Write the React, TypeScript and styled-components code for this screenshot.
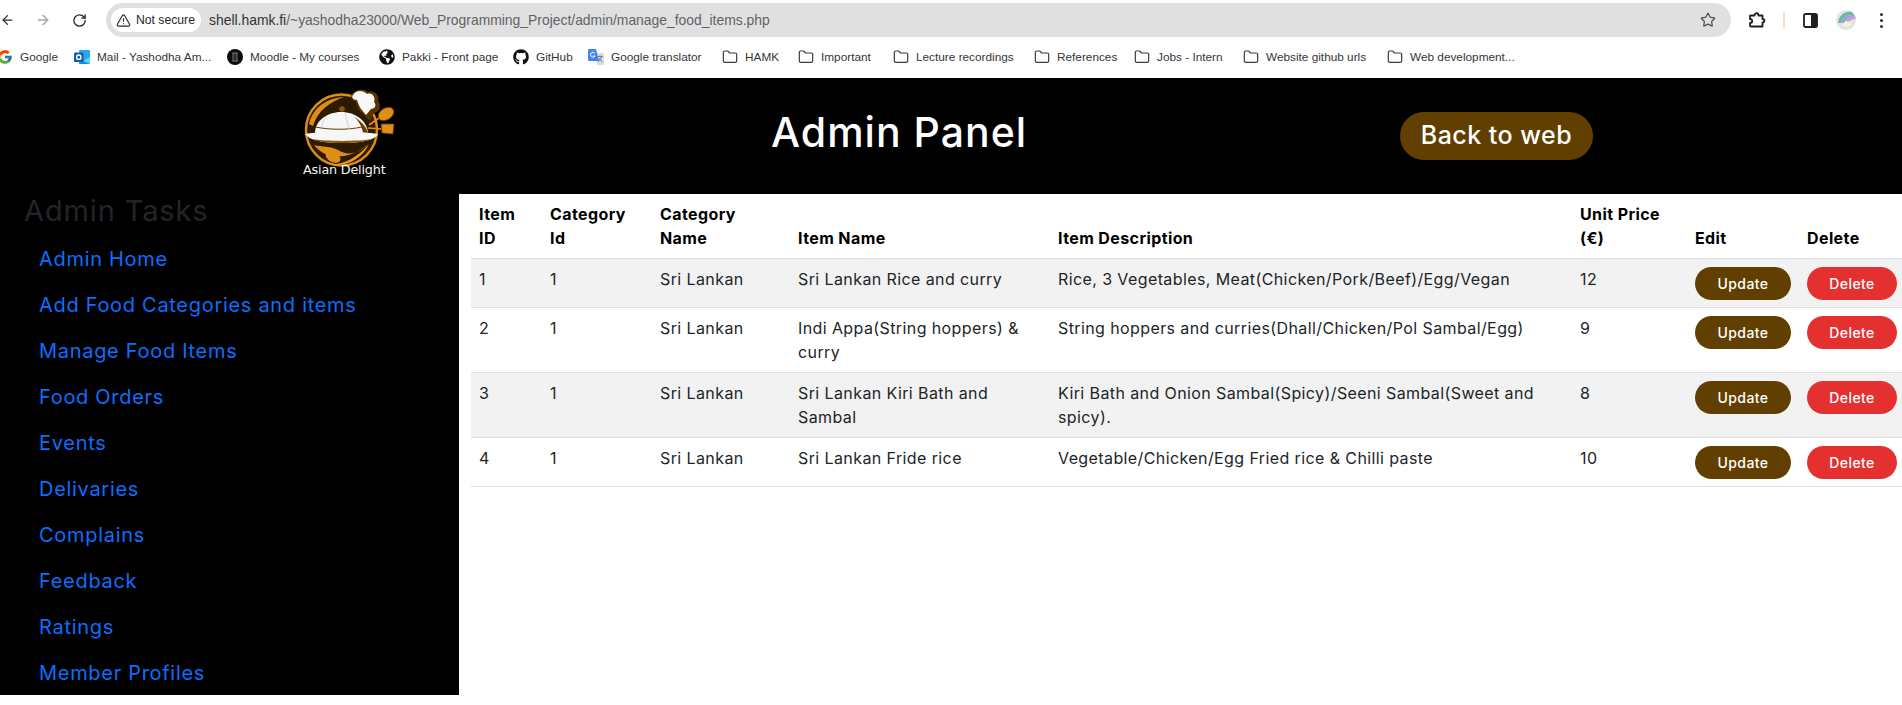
import React from "react";
import styled, { createGlobalStyle } from "styled-components";
import { ArrowLeft, ArrowRight, RotateCw, Star, TriangleAlert, Folder } from "lucide-react";
import { FaGithub, FaGlobeAmericas } from "react-icons/fa";
import { FcGoogle } from "react-icons/fc";

const Global = createGlobalStyle`
  html, body { margin: 0; padding: 0; background: #fff; }
  body { overflow: hidden; height: 705px; }
  * { box-sizing: border-box; }
`;

const PAGE_FONT = `Inter, "Open Sans", sans-serif`;
const UI_FONT = `"Liberation Sans", Arial, sans-serif`;

const Window = styled.div`
  width: 1902px;
  height: 705px;
  overflow: hidden;
  display: flex;
  flex-direction: column;
  background: #fff;
`;

const Toolbar = styled.div`
  height: 40px;
  display: flex;
  align-items: center;
  flex: none;
`;

const NavButton = styled.span<{ $w: number; $muted?: boolean }>`
  width: ${(p) => p.$w}px;
  flex: none;
  display: flex;
  justify-content: center;
  color: ${(p) => (p.$muted ? "#a3a5a8" : "#2b2d30")};
`;

const Omnibox = styled.div`
  margin-left: 19px;
  width: 1625px;
  height: 34px;
  border-radius: 17px;
  background: #e0e0e0;
  display: flex;
  align-items: center;
  padding: 0 15px 0 5px;
  font: 13.9px ${UI_FONT};
`;

const SecurePill = styled.div`
  width: 90px;
  height: 24px;
  border-radius: 12px;
  background: #fff;
  display: flex;
  align-items: center;
  gap: 5px;
  padding-left: 5px;
  font-size: 12.2px;
  color: #26282b;
  flex: none;
`;

const Url = styled.div`
  margin-left: 8px;
  flex: 1;
  color: #5f6368;
  white-space: nowrap;
  b { font-weight: 400; color: #303235; }
`;

const ToolGroup = styled.div`
  display: flex;
  align-items: center;
  flex: none;
  margin-left: 17px;
`;

const ToolDivider = styled.span`
  width: 2px;
  height: 16px;
  background: #fbdcc9;
  margin: 0 18px 0 17px;
`;

const Avatar = styled.span`
  width: 20px;
  height: 20px;
  margin-left: 18px;
  display: block;
`;

const MenuDots = styled.span`
  margin-left: 24px;
  display: flex;
  flex-direction: column;
  gap: 3px;
  i { width: 3px; height: 3px; background: #2b2d30; border-radius: 50%; display: block; }
`;

const BookmarkBar = styled.div`
  height: 38px;
  flex: none;
  display: flex;
  align-items: center;
  padding: 0 0 4px 0;
  margin-left: -3px;
  font: 11.8px ${UI_FONT};
  color: #333639;
`;

const Bookmark = styled.div<{ $w: number }>`
  display: flex;
  align-items: center;
  flex: none;
  gap: 7px;
  margin-right: 17px;
  white-space: nowrap;
  span { display: block; width: ${(p) => p.$w}px; }
  svg { flex: none; }
`;

const Header = styled.header`
  height: 116px;
  flex: none;
  background: #000;
  display: flex;
  align-items: flex-start;
  color: #fff;
  font-family: ${PAGE_FONT};
  letter-spacing: 0.03em;
`;

const LogoSlot = styled.div`
  margin-left: 270px;
  width: 160px;
  height: 116px;
  flex: none;
  svg { display: block; margin-top: 2px; }
`;

const Title = styled.h1`
  margin: 24px 0 0 0;
  width: 660px;
  padding-left: 341px;
  white-space: nowrap;
  flex: none;
  font-size: 41px;
  line-height: 60px;
  font-weight: 500;
  letter-spacing: 0.025em;
`;

const BackButton = styled.a`
  margin: 34px 0 0 310px;
  width: 193px;
  height: 48px;
  border-radius: 24px;
  background: #613f00;
  display: flex;
  align-items: center;
  justify-content: center;
  font-size: 25px;
  line-height: 1;
  padding-bottom: 2px;
  font-weight: 500;
  color: #fff;
  flex: none;
`;

const Body = styled.div`
  flex: 1;
  display: flex;
  align-items: flex-start;
  font-family: ${PAGE_FONT};
  letter-spacing: 0.025em;
`;

const Sidebar = styled.nav`
  width: 459px;
  height: 501px;
  flex: none;
  background: #000;
  padding: 0 0 0 24px;
`;

const SidebarTitle = styled.h3`
  margin: 0 0 9px;
  font-size: 29px;
  line-height: 33px;
  font-weight: 400;
  color: #212529;
  letter-spacing: 0.03em;
`;

const NavList = styled.ul`
  list-style: none;
  margin: 0;
  padding: 0 0 0 15px;
`;

const NavItem = styled.li`
  height: 46px;
  line-height: 46px;
  font-size: 20px;
  color: #0d6efd;
  white-space: nowrap;
  letter-spacing: 0.035em;
`;

const Content = styled.main`
  flex: 1;
  padding-left: 12px;
`;

const Table = styled.table`
  width: 1431px;
  table-layout: fixed;
  border-collapse: collapse;
  font-size: 16px;
  line-height: 24px;
  color: #212529;
`;

const Th = styled.th`
  text-align: left;
  vertical-align: bottom;
  font-weight: 700;
  color: #000;
  padding: 8px;
  border-bottom: 1px solid #dee2e6;
`;

const Tr = styled.tr<{ $striped: boolean }>`
  background: ${(p) => (p.$striped ? "#f2f2f2" : "#fff")};
`;

const Td = styled.td`
  vertical-align: top;
  padding: 8px;
  border-bottom: 1px solid #dee2e6;
`;

const ActionButton = styled.button<{ $kind: "update" | "delete" }>`
  display: block;
  height: 33px;
  width: ${(p) => (p.$kind === "update" ? 96 : 90)}px;
  margin-bottom: -1px;
  padding: 0;
  border: 0;
  border-radius: 17px;
  background: ${(p) => (p.$kind === "update" ? "#613f00" : "#e53030")};
  color: #fff;
  letter-spacing: 0.03em;
  font: 500 14px/21px ${PAGE_FONT};
`;

const Logo = () => (
  <svg width="160" height="112" viewBox="0 0 160 112" role="img" aria-label="Asian Delight logo">
    <circle cx="71.5" cy="50" r="35.5" fill="#2e1a00" stroke="#dd8e14" strokeWidth="2.4" />
    <path d="M39 44 C43 27 57 18 74 17 C60 22 48 30 43 46 Z" fill="#dd8e14" />
    <path d="M44 65 C54 79 78 82 98 64 C89 74 77 76 68 70 C60 66 52 67 44 65 Z" fill="#dd8e14" />
    <path d="M99 64 C92 79 78 86 62 85 C76 83 88 77 99 64 Z" fill="#e89a1c" />
    <ellipse cx="63" cy="77" rx="8" ry="5" transform="rotate(28 63 77)" fill="#e08f16" />
    <path d="M45 53 C45 41 57 32 71 32 C86 32 97 41 98 53 Z" fill="#f6f6f6" />
    <path d="M84 37 C91 41 96 46 98 53 L93 53 C92 47 89 41 84 37 Z" fill="#6a3c00" />
    <path d="M45.5 47 C60 50 78 50 92 47" stroke="#6a3c00" strokeWidth="1" fill="none" />
    <path d="M57 36 C53 40 52 44 52 48 M75 33 L79 49" stroke="#c9c9c9" strokeWidth="0.8" fill="none" />
    <circle cx="72" cy="29" r="2.8" fill="#8a5608" />
    <path d="M35 54 C50 51 92 51 108 54 C105 60 92 63 72 63 C52 63 39 60 35 54 Z" fill="#f6f6f6" />
    <path d="M42 59 C55 61.5 90 61.5 102 59 C95 62 86 63 72 63 C58 63 49 62 42 59 Z" fill="#8a5608" />
    <path d="M82 14 C85 9 94 8 98 12 C104 10 110 15 108 21 C112 25 110 32 104 33 L100 41 L92 33 C88 30 87 25 86 22 C82 21 80 17 82 14 Z" fill="#5a3200" />
    <path d="M83 15 C86 10 93 10 97 14 C102 12 106 17 104 22 C107 25 105 29 101 29 L96 35 L91 29 C89 26 88 23 87 20 C83 20 81 17 83 15 Z" fill="#f8f8f8" />
    <path d="M99 45 L109 38" stroke="#e08f16" strokeWidth="1.6" />
    <ellipse cx="116" cy="34" rx="8.5" ry="5.8" transform="rotate(-32 116 34)" fill="#e08f16" stroke="#6a3c00" strokeWidth="0.8" />
    <path d="M98 48 L112 49" stroke="#e08f16" strokeWidth="1.6" />
    <path d="M111 44 L124 44 L123 54 L112 53 Z" fill="#e08f16" stroke="#6a3c00" strokeWidth="0.8" />
    <text x="33" y="94" fontFamily='"DejaVu Sans", sans-serif' fontSize="12.8" letterSpacing="-0.2" fill="#f4f4f4">
      Asian Delight
    </text>
  </svg>
);

const OutlookIcon = () => (
  <svg width="16" height="16" viewBox="0 0 16 16">
    <rect x="5" y="1" width="11" height="14" rx="1" fill="#28a8ea" />
    <path d="M5 8 L16 15 H6 a1 1 0 0 1 -1 -1 Z" fill="#1490df" />
    <path d="M16 8 L9 12 L16 15 Z" fill="#50d9ff" />
    <rect x="0" y="3.5" width="9.5" height="9.5" rx="1" fill="#0f5fad" />
    <circle cx="4.8" cy="8.2" r="2.2" fill="none" stroke="#fff" strokeWidth="1.4" />
  </svg>
);

const MoodleIcon = () => (
  <svg width="16" height="16" viewBox="0 0 16 16">
    <circle cx="8" cy="8" r="8" fill="#0c0c0c" />
    <rect x="5" y="3" width="6" height="10" rx="2.5" fill="#6a6a6a" />
    <path d="M5 6 H11 M5 8 H11 M5 10 H11 M8 3 V13" stroke="#0c0c0c" strokeWidth="0.8" />
  </svg>
);

const TranslateIcon = () => (
  <svg width="16" height="16" viewBox="0 0 16 16">
    <path d="M7 4 L15 4 a1 1 0 0 1 1 1 V15 a1 1 0 0 1 -1 1 H9 Z" fill="#dadce0" />
    <path d="M10 7.5 H14.5 M12.2 6.5 V7.5 M13.6 7.5 C13 10 11.6 11.6 10 12.6 M10.8 9 C11.4 10.6 13 12 14.5 12.6" stroke="#6b6f73" strokeWidth="0.9" fill="none" />
    <path d="M1 0 H8 L11 12 H1 a1 1 0 0 1 -1 -1 V1 a1 1 0 0 1 1 -1 Z" fill="#4285f4" />
    <path d="M6.8 4.2 A2.4 2.4 0 1 0 7 7 H5" stroke="#fff" strokeWidth="1" fill="none" />
  </svg>
);

const ExtensionIcon = () => (
  <svg width="18" height="18" viewBox="0 0 18 18" fill="none" stroke="#1f2023" strokeWidth="1.8" strokeLinejoin="round">
    <path d="M3 4.5 H6.5 C6.5 1.5 10.5 1.5 10.5 4.5 H14.5 V8 C17 8 17 11.5 14.5 11.5 V15.5 H3 C2.5 15.5 2 15 2 14.5 V12 C5 12 5 8 2 8 V5 C2 4.7 2.5 4.5 3 4.5 Z" />
  </svg>
);

const SidePanelIcon = () => (
  <svg width="15" height="15" viewBox="0 0 15 15">
    <rect x="1" y="1" width="13" height="13" rx="1.6" fill="#fff" stroke="#1f2023" strokeWidth="1.8" />
    <rect x="8" y="1" width="6" height="13" fill="#1f2023" />
  </svg>
);

const AvatarArt = () => (
  <svg width="20" height="20" viewBox="0 0 20 20">
    <defs>
      <clipPath id="avatar-clip"><circle cx="10" cy="10" r="10" /></clipPath>
    </defs>
    <g clipPath="url(#avatar-clip)">
      <rect width="20" height="20" fill="#e4e4e2" />
      <path d="M2 13 C3 4 10 0 19 2 L20 5 C12 4 7 7 5 13 Z" fill="#6fb8a0" />
      <path d="M5 13 C7 7 12 4 20 5 L20 7 C14 6 10 9 8 13 Z" fill="#8fa6e0" />
      <path d="M8 13 C10 9 14 6 20 7 L20 9 C16 9 13 11 11 13 Z" fill="#c99bd8" />
      <path d="M5 15 L10 11 L16 13 L13 17 Z" fill="#f7f1dc" />
    </g>
  </svg>
);

const folder = <Folder size={16} color="#3c3c3c" strokeWidth={1.8} />;

const bookmarks: { label: string; w: number; icon: React.ReactNode }[] = [
  { label: "Google", w: 37, icon: <FcGoogle size={16} /> },
  { label: "Mail - Yashodha Am...", w: 113, icon: <OutlookIcon /> },
  { label: "Moodle - My courses", w: 112, icon: <MoodleIcon /> },
  { label: "Pakki - Front page", w: 94, icon: <FaGlobeAmericas size={16} color="#111" /> },
  { label: "GitHub", w: 35, icon: <FaGithub size={16} color="#111" /> },
  { label: "Google translator", w: 94, icon: <TranslateIcon /> },
  { label: "HAMK", w: 36, icon: folder },
  { label: "Important", w: 55, icon: folder },
  { label: "Lecture recordings", w: 101, icon: folder },
  { label: "References", w: 60, icon: folder },
  { label: "Jobs - Intern", w: 69, icon: folder },
  { label: "Website github urls", w: 104, icon: folder },
  { label: "Web development...", w: 107, icon: folder },
];

const navItems = [
  "Admin Home",
  "Add Food Categories and items",
  "Manage Food Items",
  "Food Orders",
  "Events",
  "Delivaries",
  "Complains",
  "Feedback",
  "Ratings",
  "Member Profiles",
];

const columns: { label: React.ReactNode; w: number }[] = [
  { label: <>Item<br />ID</>, w: 71 },
  { label: <>Category<br />Id</>, w: 110 },
  { label: <>Category<br />Name</>, w: 138 },
  { label: "Item Name", w: 260 },
  { label: "Item Description", w: 522 },
  { label: <>Unit Price<br />(€)</>, w: 115 },
  { label: "Edit", w: 112 },
  { label: "Delete", w: 103 },
];

const rows = [
  { id: 1, name: "Sri Lankan Rice and curry", desc: "Rice, 3 Vegetables, Meat(Chicken/Pork/Beef)/Egg/Vegan", price: 12 },
  { id: 2, name: "Indi Appa(String hoppers) & curry", desc: "String hoppers and curries(Dhall/Chicken/Pol Sambal/Egg)", price: 9 },
  { id: 3, name: "Sri Lankan Kiri Bath and Sambal", desc: "Kiri Bath and Onion Sambal(Spicy)/Seeni Sambal(Sweet and spicy).", price: 8 },
  { id: 4, name: "Sri Lankan Fride rice", desc: "Vegetable/Chicken/Egg Fried rice & Chilli paste", price: 10 },
];

export default function App() {
  return (
    <Window>
      <Global />
      <Toolbar>
        <NavButton $w={15}><ArrowLeft size={16} strokeWidth={2} /></NavButton>
        <NavButton $w={56} $muted><ArrowRight size={16} strokeWidth={2} /></NavButton>
        <NavButton $w={16}><RotateCw size={15} strokeWidth={2.2} /></NavButton>
        <Omnibox>
          <SecurePill><TriangleAlert size={15} strokeWidth={1.8} />Not secure</SecurePill>
          <Url><b>shell.hamk.fi</b>/~yashodha23000/Web_Programming_Project/admin/manage_food_items.php</Url>
          <Star size={16} color="#4a4d50" strokeWidth={1.8} />
        </Omnibox>
        <ToolGroup>
          <ExtensionIcon />
          <ToolDivider />
          <SidePanelIcon />
          <Avatar><AvatarArt /></Avatar>
          <MenuDots><i /><i /><i /></MenuDots>
        </ToolGroup>
      </Toolbar>
      <BookmarkBar>
        {bookmarks.map((b) => (
          <Bookmark key={b.label} $w={b.w}>
            {b.icon}
            <span>{b.label}</span>
          </Bookmark>
        ))}
      </BookmarkBar>
      <Header>
        <LogoSlot><Logo /></LogoSlot>
        <Title>Admin Panel</Title>
        <BackButton>Back to web</BackButton>
      </Header>
      <Body>
        <Sidebar>
          <SidebarTitle>Admin Tasks</SidebarTitle>
          <NavList>
            {navItems.map((n) => <NavItem key={n}>{n}</NavItem>)}
          </NavList>
        </Sidebar>
        <Content>
          <Table>
            <colgroup>
              {columns.map((c, i) => <col key={i} width={c.w} />)}
            </colgroup>
            <thead>
              <tr>{columns.map((c, i) => <Th key={i}>{c.label}</Th>)}</tr>
            </thead>
            <tbody>
              {rows.map((r, i) => (
                <Tr key={r.id} $striped={i % 2 === 0}>
                  <Td>{r.id}</Td>
                  <Td>1</Td>
                  <Td>Sri Lankan</Td>
                  <Td>{r.name}</Td>
                  <Td>{r.desc}</Td>
                  <Td>{r.price}</Td>
                  <Td><ActionButton $kind="update">Update</ActionButton></Td>
                  <Td><ActionButton $kind="delete">Delete</ActionButton></Td>
                </Tr>
              ))}
            </tbody>
          </Table>
        </Content>
      </Body>
    </Window>
  );
}
